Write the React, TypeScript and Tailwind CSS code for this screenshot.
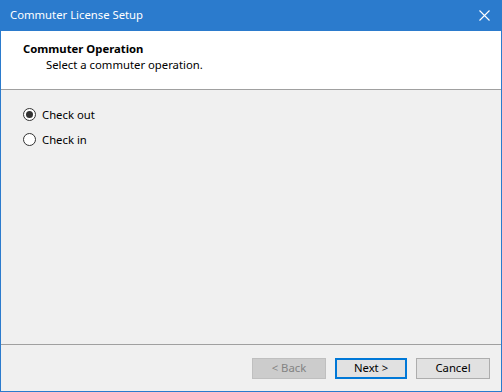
const font = { fontFamily: '"Noto Sans", "Liberation Sans", sans-serif' };

function Radio({ checked, label }: { checked?: boolean; label: string }) {
  return (
    <label className="flex items-center h-[13px] gap-[6px] text-[11.3px] text-black">
      <span className="w-[13px] h-[13px] rounded-full border border-[#333333] bg-white flex items-center justify-center">
        {checked && <span className="w-[7px] h-[7px] rounded-full bg-[#333333]" />}
      </span>
      <span className="leading-none">{label}</span>
    </label>
  );
}

export default function App() {
  return (
    <div
      className="w-[502px] h-[392px] flex flex-col border border-t-0 border-[#2b7bcd] bg-[#f0f0f0] overflow-hidden"
      style={font}
    >
      {/* title bar */}
      <div className="h-[31px] bg-[#2b7bcd] flex items-center justify-between pl-[9px] pr-[10px] text-white text-[11.3px]">
        <span>Commuter License Setup</span>
        <svg width="11" height="11" viewBox="0 0 11 11" className="mr-[1px]">
          <path d="M0.5 0.5L10.5 10.5M10.5 0.5L0.5 10.5" stroke="white" strokeWidth="1.1" />
        </svg>
      </div>

      {/* header */}
      <div className="h-[59px] bg-white border-b border-[#a0a0a0] pl-[22px] pt-[10px]">
        <div className="text-[11.3px] font-bold text-black leading-[16px]">Commuter Operation</div>
        <div className="text-[11.3px] text-black leading-[16px] pl-[23px]">Select a commuter operation.</div>
      </div>

      {/* body */}
      <div className="flex-1 flex flex-col gap-[12px] pl-[22px] pt-[18px]">
        <Radio checked label="Check out" />
        <Radio label="Check in" />
      </div>

      {/* footer */}
      <div className="h-[47px] border-t border-[#a0a0a0] flex justify-end items-start pt-[13px] pr-[11px] gap-[9px] text-[11.3px]">
        <button className="w-[74px] h-[21px] bg-[#cccccc] border border-[#bfbfbf] text-[#838383]">&lt; Back</button>
        <button className="w-[72px] h-[21px] bg-[#e1e1e1] border-2 border-[#0078d7] text-black">Next &gt;</button>
        <button className="w-[74px] h-[21px] bg-[#e1e1e1] border border-[#adadad] text-black">Cancel</button>
      </div>
    </div>
  );
}
